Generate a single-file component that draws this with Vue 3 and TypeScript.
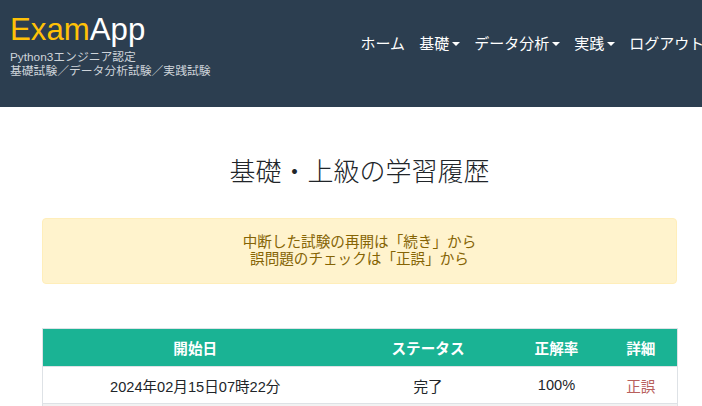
<script setup lang="ts">
interface NavItem { label: string; caret: boolean }
const nav: NavItem[] = [
  { label: 'ホーム', caret: false },
  { label: '基礎', caret: true },
  { label: 'データ分析', caret: true },
  { label: '実践', caret: true },
  { label: 'ログアウト', caret: false },
]
</script>

<template>
  <div class="page">
    <header class="navbar">
      <div class="brand">
        <div class="logo"><span class="exam">Exam</span>App</div>
        <div class="sub">Python3エンジニア認定<br />基礎試験／データ分析試験／実践試験</div>
      </div>
      <nav class="nav">
        <a v-for="n in nav" :key="n.label" class="link">{{ n.label }}<i v-if="n.caret" class="caret"></i></a>
      </nav>
    </header>
    <main class="main">
      <h1 class="title">基礎・上級の学習履歴</h1>
      <div class="alert">中断した試験の再開は「続き」から<br />誤問題のチェックは「正誤」から</div>
      <table class="table">
        <colgroup>
          <col class="c1" /><col class="c2" /><col class="c3" /><col class="c4" />
        </colgroup>
        <thead>
          <tr><th>開始日</th><th>ステータス</th><th>正解率</th><th>詳細</th></tr>
        </thead>
        <tbody>
          <tr>
            <td>2024年02月15日07時22分</td><td>完了</td><td>100%</td><td><a class="detail">正誤</a></td>
          </tr>
          <tr class="next"><td></td><td></td><td></td><td></td></tr>
        </tbody>
      </table>
    </main>
  </div>
</template>

<style>
html, body { margin: 0; overflow: hidden; background: #fff; }
</style>

<style scoped>
.page {
  width: 702px;
  height: 406px;
  overflow: hidden;
  font-family: "Liberation Sans", "Noto Sans CJK JP", sans-serif;
  color: #212529;
}
.navbar {
  height: 107px;
  box-sizing: border-box;
  background: #2c3e50;
  display: flex;
  align-items: flex-start;
  padding: 12px 0 0 10px;
  white-space: nowrap;
}
.logo { font-size: 31.2px; line-height: 36px; color: #fff; }
.exam { color: #ffc107; }
.sub { font-size: 11.8px; line-height: 14px; color: #ced4da; margin-top: 2px; }
.nav {
  display: flex;
  gap: 14px;
  margin-top: 23px;
  margin-left: 150px;
  font-size: 15px;
  line-height: 18px;
  color: #fff;
}
.link { display: flex; align-items: center; }
.caret {
  width: 0; height: 0;
  margin-left: 3px;
  border-left: 4px solid transparent;
  border-right: 4px solid transparent;
  border-top: 4px solid #fff;
}
.main { padding: 0 25px 0 42px; }
.title {
  margin: 49px 0 30px;
  text-align: center;
  font-size: 26px;
  line-height: 32px;
  font-weight: 300;
}
.alert {
  box-sizing: border-box;
  height: 66px;
  padding: 15px 16px;
  text-align: center;
  font-size: 14.6px;
  line-height: 17px;
  color: #856404;
  background: #fff3cd;
  border: 1px solid #ffeeba;
  border-radius: 4px;
}
.table {
  margin-top: 44px;
  width: 635px;
  table-layout: fixed;
  border-collapse: collapse;
  font-size: 14.6px;
  border: 1px solid #dee2e6;
}
.c1 { width: 305px; }
.c2 { width: 161px; }
.c3 { width: 96px; }
.c4 { width: 73px; }
th {
  height: 37px;
  padding: 0;
  background: #1ab394;
  color: #fff;
  font-weight: 700;
  text-align: center;
  border-bottom: 1px solid #dee2e6;
}
td {
  height: 36px;
  padding: 0;
  text-align: center;
  border-bottom: 1px solid #dee2e6;
}
.next td { background: #f2f2f2; }
.detail { color: #b8605c; }
</style>
